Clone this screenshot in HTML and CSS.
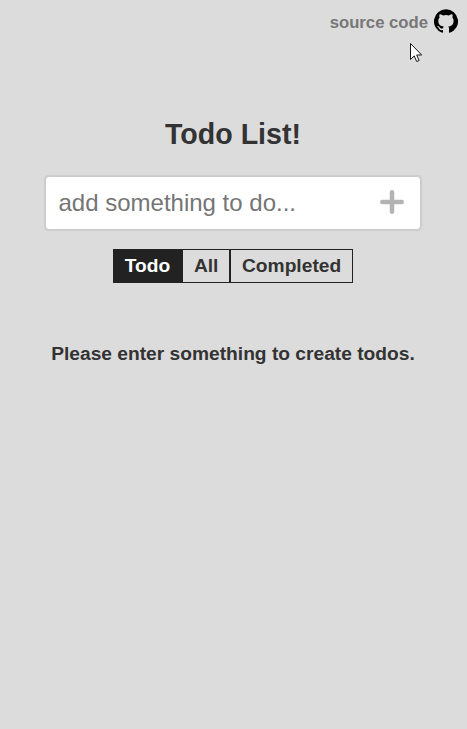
FILE: index.html
```html
<!DOCTYPE html>
<html lang="en">
<head>
<meta charset="utf-8">
<title>Todo List</title>
<link rel="stylesheet" href="styles.css">
</head>
<body>
<header class="top">
  <a class="source">source code</a>
  <svg class="github" viewBox="0 0 24 24"><path d="M12 .3a12 12 0 0 0-3.8 23.4c.6.1.8-.3.8-.6v-2c-3.3.7-4-1.6-4-1.6-.6-1.4-1.4-1.8-1.4-1.8-1-.7.1-.7.1-.7 1.2 0 1.9 1.2 1.9 1.2 1 1.8 2.8 1.3 3.5 1 0-.8.4-1.3.7-1.6-2.7-.3-5.5-1.3-5.5-6 0-1.2.5-2.3 1.3-3.1-.2-.4-.6-1.6 0-3.2 0 0 1-.3 3.4 1.2a11.5 11.5 0 0 1 6 0c2.3-1.5 3.3-1.2 3.3-1.2.6 1.6.2 2.8 0 3.2.9.8 1.3 1.9 1.3 3.2 0 4.6-2.8 5.6-5.5 5.9.5.4.9 1 .9 2.2v3.3c0 .3.1.7.8.6A12 12 0 0 0 12 .3"/></svg>
</header>
<main class="app">
  <h1 class="title">Todo List!</h1>
  <form class="entry">
    <input class="field" type="text" placeholder="add something to do...">
    <svg class="plus" viewBox="0 0 24 24"><path d="M12 2.3v19.4M2.3 12h19.4"/></svg>
  </form>
  <nav class="filters">
    <span class="filter active">Todo</span>
    <span class="filter">All</span>
    <span class="filter">Completed</span>
  </nav>
  <p class="message">Please enter something to create todos.</p>
</main>
<svg class="cursor" viewBox="0 0 12 19"><path d="M.5.5v16l3.7-3.6 2.5 5.6 2.4-1-2.4-5.5h5z"/></svg>
</body>
</html>
```
FILE: styles.css
```css
* {
  box-sizing: border-box;
}

body {
  margin: 0;
  min-height: 100vh;
  background: #dcdcdc;
  color: #333;
  font-family: "Liberation Sans", Arial, sans-serif;
}

.top {
  display: flex;
  justify-content: flex-end;
  align-items: center;
  gap: 6px;
  height: 42px;
  padding-right: 9px;
}

.source {
  color: #777;
  font-size: 16.7px;
  font-weight: 700;
  line-height: 20px;
  margin-top: 4px;
}

.github {
  width: 24px;
  height: 24px;
}

.app {
  display: flex;
  flex-direction: column;
  align-items: center;
  padding-right: 1px;
}

.title {
  margin: 75px 0 25px;
  font-size: 28.6px;
  line-height: 34px;
}

.entry {
  display: flex;
  align-items: center;
  width: 376px;
  height: 54px;
  padding: 0 16px 0 12.5px;
  background: #fff;
  border: 1px solid #ccc;
  border-radius: 4px;
  box-shadow: 0 0 1px 0.5px #ccc;
}

.field {
  flex: 1;
  min-width: 0;
  padding: 0;
  border: 0;
  outline: 0;
  background: none;
  font: 24px "Liberation Sans", Arial, sans-serif;
}

.field::placeholder {
  color: #757575;
}

.plus {
  width: 24px;
  height: 24px;
  margin-top: -2px;
  fill: none;
  stroke: #b3b3b3;
  stroke-width: 4.5;
  stroke-linecap: round;
}

.filters {
  display: flex;
  margin-top: 19px;
}

.filter {
  height: 34px;
  padding: 0 10.8px;
  border: 1px solid #222;
  font-size: 19.2px;
  font-weight: 700;
  line-height: 32px;
}

.active {
  background: #222;
  color: #fff;
}

.message {
  margin: 60px 0 0;
  font-size: 19.2px;
  font-weight: 700;
  line-height: 22px;
}

.cursor {
  position: absolute;
  left: 410px;
  top: 43px;
  width: 12px;
  height: 19px;
  fill: #fff;
  stroke: #15151f;
}
```
